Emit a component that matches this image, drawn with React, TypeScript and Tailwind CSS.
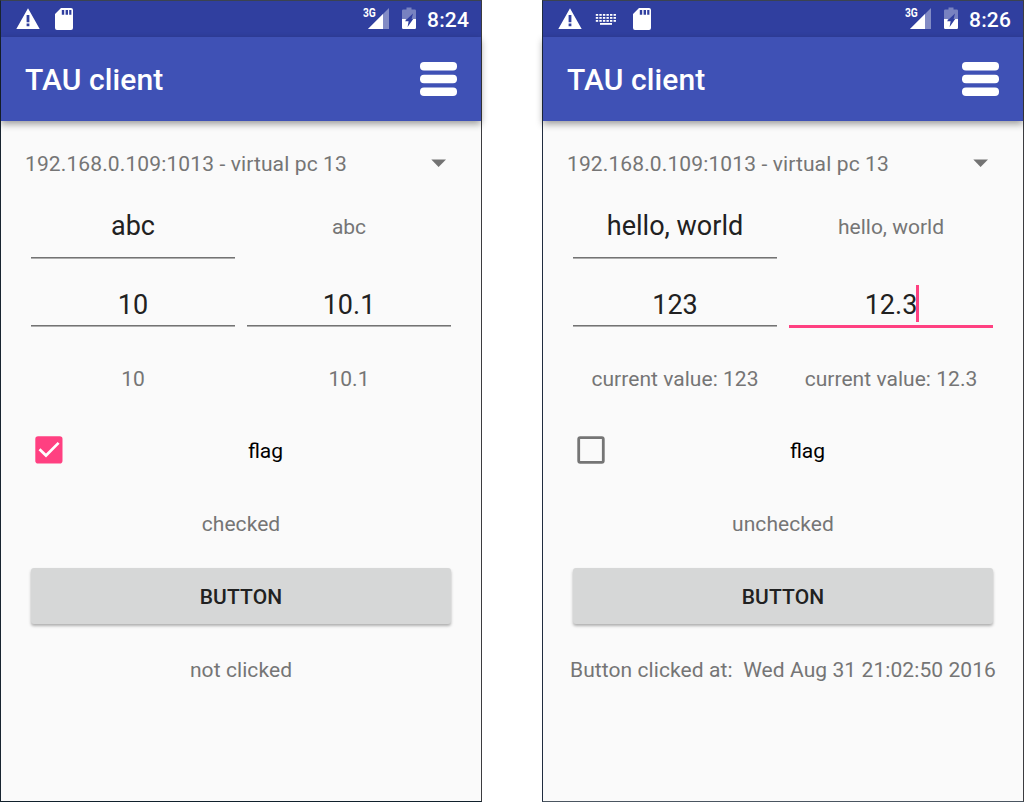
import React from "react";

const CELL = "h-9 w-9 shrink-0";

function WarningIcon() {
  return (
    <svg className={CELL} viewBox="0 0 36 36" fill="white">
      <path
        fillRule="evenodd"
        d="M18 7.2 L29.7 28 H6.3 Z M16.6 14 V21.2 H19.4 V14 Z M16.6 22.6 V25.2 H19.4 V22.6 Z"
      />
    </svg>
  );
}

function KeyboardIcon() {
  const cols = [0, 1, 2, 3, 4, 5];
  return (
    <svg className={CELL} viewBox="0 0 36 36" fill="white">
      {cols.map((c) => (
        <g key={c}>
          <rect x={7.8 + c * 3.55} y="13" width="2.4" height="1.8" />
          <rect x={7.8 + c * 3.55} y="16" width="2.4" height="1.8" />
          <rect x={7.8 + c * 3.55} y="19" width="2.4" height="1.8" />
        </g>
      ))}
      <rect x="12" y="22" width="12" height="1.8" />
    </svg>
  );
}

function SdCardIcon() {
  return (
    <svg className={CELL} viewBox="0 0 36 36" fill="white">
      <path
        fillRule="evenodd"
        d="M15 7 H25 Q27 7 27 9 V27 Q27 29 25 29 H11 Q9 29 9 27 V13 Z M15.8 9 V13.8 H18.2 V9 Z M19.6 9 V13.8 H22 V9 Z M23.2 9 V13.8 H25.4 V9 Z"
      />
    </svg>
  );
}

function SignalIcon() {
  return (
    <div className="relative h-9 w-[21px]">
      <svg className="h-9 w-[21px]" viewBox="0 0 21 36" fill="white">
        <path d="M0 28 L21 7 V28 Z" opacity="0.4" />
        <path d="M0 28 L15 13 V28 Z" />
      </svg>
      <span className="absolute -left-[5px] top-[6px] origin-left scale-x-[0.85] text-[12px] font-bold leading-[13px]">3G</span>
    </div>
  );
}

function BatteryIcon() {
  return (
    <svg className="ml-[13px] h-9 w-[14px]" viewBox="0 0 14 36" fill="white">
      <path d="M4.5 6.5 H9.5 V8.5 H12.8 Q14 8.5 14 9.7 V18 H9.6 L11 12.4 L3 20 H0 V9.7 Q0 8.5 1.2 8.5 H4.5 Z" opacity="0.35" />
      <path d="M0 18 H4 L3.2 20.2 H6.6 L5.6 26 L11.2 18 H14 V26.8 Q14 28 12.8 28 H1.2 Q0 28 0 26.8 Z" />
    </svg>
  );
}

function MenuIcon() {
  return (
    <svg className="h-[34px] w-[37px]" viewBox="0 0 37 34" fill="white">
      <rect y="0" width="37" height="8.4" rx="4" />
      <rect y="12.8" width="37" height="8.4" rx="4" />
      <rect y="25.6" width="37" height="8.4" rx="4" />
    </svg>
  );
}

function Checkbox({ checked }: { checked: boolean }) {
  return (
    <svg className="h-7 w-7 shrink-0" viewBox="0 0 28 28" fill="none">
      {checked ? (
        <>
          <rect x="0.3" y="0.3" width="27.2" height="27.2" rx="2.8" fill="#ff4081" />
          <path d="M4.5 13.2 L11 19.5 L23.6 6.9" stroke="white" strokeWidth="2.7" />
        </>
      ) : (
        <rect x="1.7" y="1.7" width="24.6" height="24.6" rx="1.5" stroke="#757575" strokeWidth="2.8" />
      )}
    </svg>
  );
}

type FieldProps = { value: string; tall?: boolean; focused?: boolean };

function Field({ value, tall, focused }: FieldProps) {
  return (
    <div className={tall ? "flex h-[55px] w-[204px] flex-col" : "flex h-[44px] w-[204px] flex-col"}>
      <div
        className={
          tall
            ? "flex h-[42px] shrink-0 items-center justify-center text-[27px] leading-8 text-[#212121]"
            : "flex h-[40px] shrink-0 items-center justify-center text-[27px] leading-8 text-[#212121]"
        }
      >
        <span className="relative">
          {value}
          {focused && <span className="absolute -right-[2px] -top-[4px] h-[37px] w-[3px] bg-[#ff4081]" />}
        </span>
      </div>
      <div className={tall ? "h-[10px] shrink-0" : "h-0"} />
      {focused ? (
        <div className="h-[3px] shrink-0 bg-[#ff4081]" />
      ) : (
        <div className="flex shrink-0 flex-col">
          <div className="h-px bg-[#737373]" />
          <div className="h-px bg-[#aeaeae]" />
        </div>
      )}
    </div>
  );
}

type PhoneProps = {
  time: string;
  keyboard?: boolean;
  text: string;
  int: string;
  float: string;
  intLabel: string;
  floatLabel: string;
  focused?: boolean;
  checked: boolean;
  status: string;
  frame: string;
};

function Phone(p: PhoneProps) {
  return (
    <div className={`flex h-[802px] w-[482px] flex-col border bg-[#fafafa] ${p.frame}`}>
      <div className="flex h-9 items-center bg-[#303f9f] pl-[9px] pr-[12px] text-white">
        <WarningIcon />
        {p.keyboard && <KeyboardIcon />}
        <SdCardIcon />
        <div className="grow" />
        <SignalIcon />
        <BatteryIcon />
        <span className="ml-[11px] w-[42px] whitespace-nowrap pt-px text-[21px] font-medium leading-9 tracking-[0.2px]">{p.time}</span>
      </div>
      <div className="flex h-[84px] items-center justify-between bg-[#3f51b5] px-6 text-white shadow-[0_3px_7px_rgba(0,0,0,0.38)]">
        <h1 className="pt-[2px] text-[30px] font-medium leading-9 tracking-[0.1px]">TAU client</h1>
        <MenuIcon />
      </div>
      <div className="flex flex-col px-6 pt-6 text-[21px] text-[#757575]">
        <div className="flex h-9 items-center justify-between pr-[11px]">
          <span className="pt-[3px] tracking-[0.12px]">192.168.0.109:1013 - virtual pc 13</span>
          <svg className="h-2 w-[15px]" viewBox="0 0 15 8" fill="#737373">
            <path d="M0.3 0.5 H15 L7.6 8 Z" />
          </svg>
        </div>
        <div className="mt-6 flex gap-3 px-[6px]">
          <Field value={p.text} tall />
          <div className="flex h-[46px] w-[204px] items-center justify-center">{p.text}</div>
        </div>
        <div className="mt-[25px] flex gap-3 px-[6px]">
          <Field value={p.int} />
          <Field value={p.float} focused={p.focused} />
        </div>
        <div className="mt-[35px] flex h-[32px] items-center tracking-[0.04px]">
          <div className="w-[216px] text-center">{p.intLabel}</div>
          <div className="w-[216px] text-center">{p.floatLabel}</div>
        </div>
        <div className="mt-[38px] flex h-[32px] items-center pl-[10px]">
          <Checkbox checked={p.checked} />
          <span className="flex-1 pl-[11px] pt-[3px] text-center text-black">flag</span>
        </div>
        <div className="mt-[43px] flex h-[32px] items-center justify-center tracking-[0.06px]">{p.checked ? "checked" : "unchecked"}</div>
        <button className="mx-[6px] mt-[27px] h-[56px] rounded-[3px] bg-[#d6d7d7] pt-[3px] font-medium tracking-[0.15px] text-[#212121] shadow-[0_2px_3px_rgba(0,0,0,0.3)]">
          BUTTON
        </button>
        <div className="-mx-2 mt-[31px] flex h-[32px] items-center justify-center whitespace-pre tracking-[0.08px]">{p.status}</div>
      </div>
    </div>
  );
}

export default function App() {
  return (
    <main className="flex h-[802px] w-[1024px] justify-between overflow-hidden bg-white font-[Roboto,sans-serif]">
      <Phone
        time="8:24"
        text="abc"
        int="10"
        float="10.1"
        intLabel="10"
        floatLabel="10.1"
        checked
        status="not clicked"
        frame="border-t-[#3b4350] border-r-[#3c3c3f] border-b-[#10202c] border-l-[#182430]"
      />
      <Phone
        time="8:26"
        keyboard
        text="hello, world"
        int="123"
        float="12.3"
        intLabel="current value: 123"
        floatLabel="current value: 12.3"
        focused
        checked={false}
        status="Button clicked at:  Wed Aug 31 21:02:50 2016"
        frame="border-t-[#3b4350] border-r-[#3c3c3f] border-b-[#4a5560] border-l-[#202c40]"
      />
    </main>
  );
}
